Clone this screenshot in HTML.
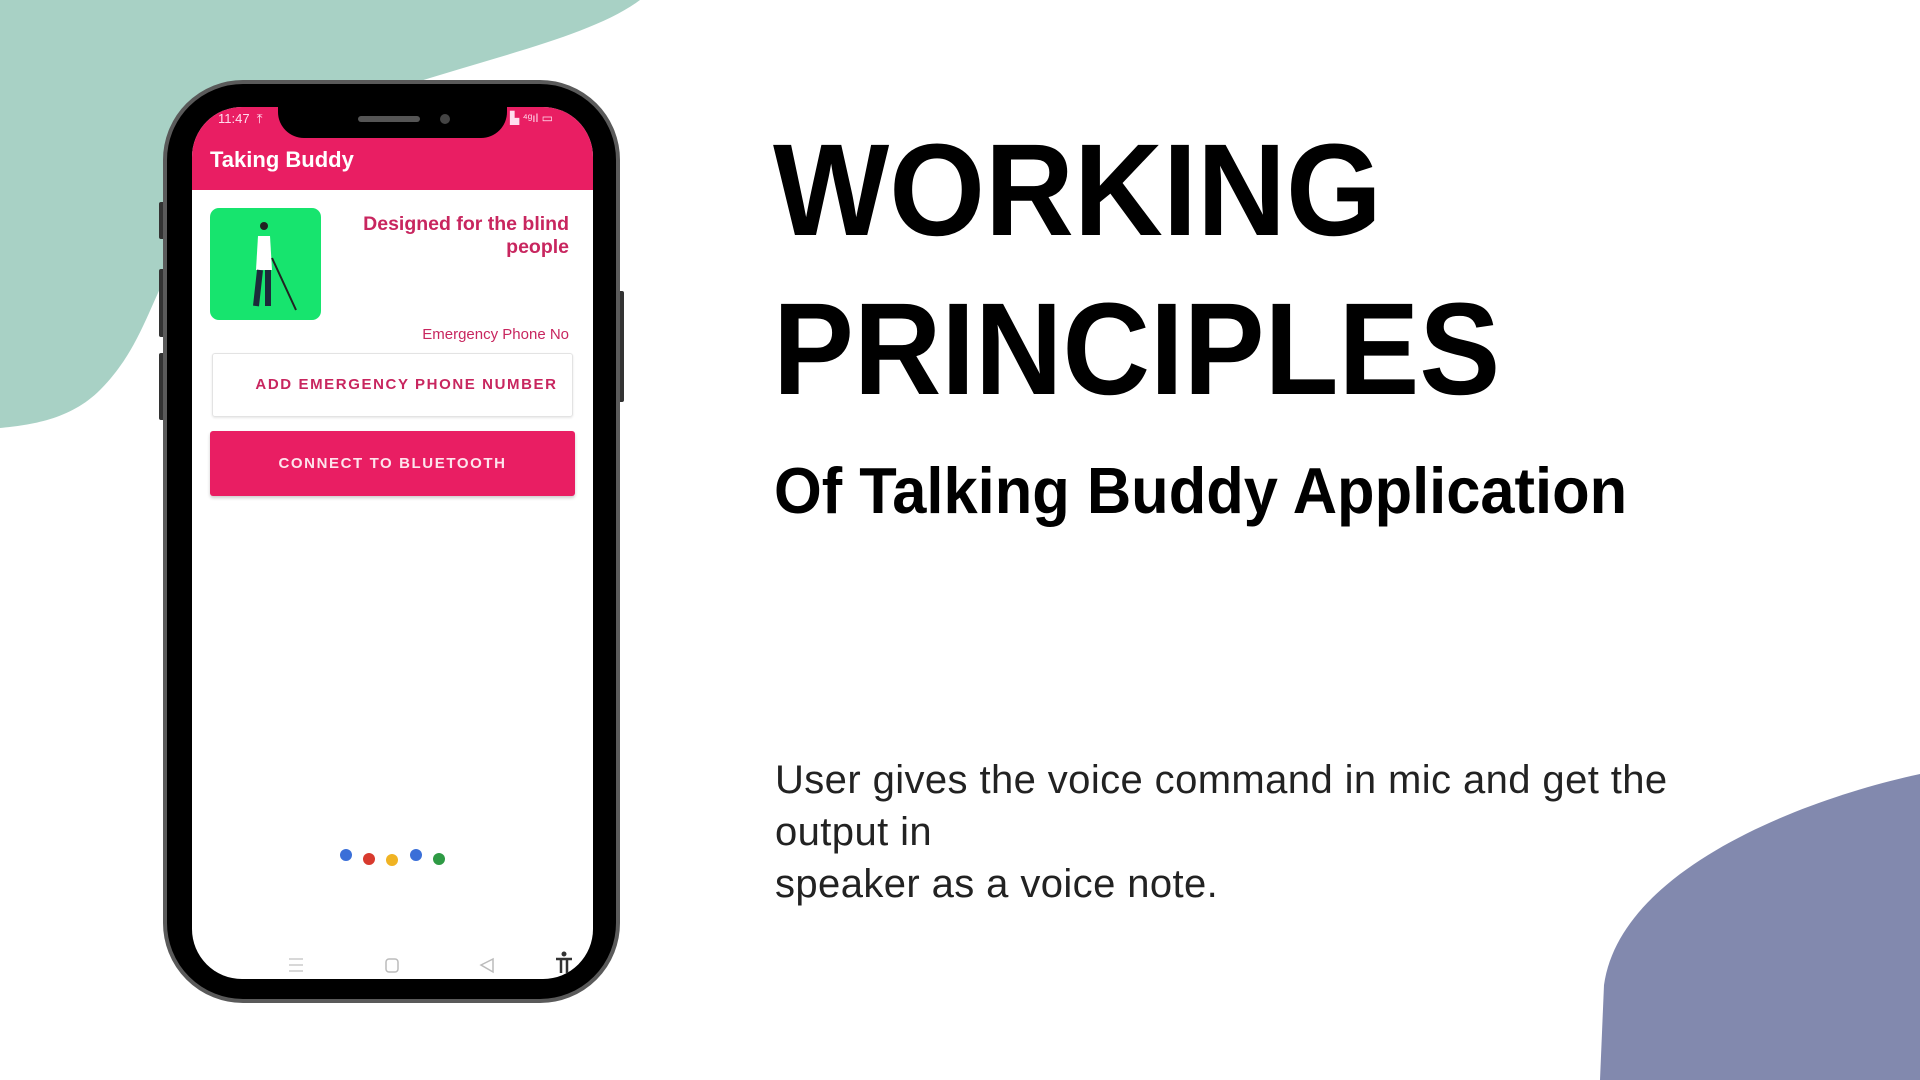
<!DOCTYPE html>
<html><head><meta charset="utf-8"><style>
*{margin:0;padding:0;box-sizing:border-box}
body{width:1920px;height:1080px;position:relative;overflow:hidden;background:#fff;font-family:"Liberation Sans",sans-serif}
.a{position:absolute}
.h{font-weight:bold;color:#000;transform-origin:0 0;white-space:nowrap;font-size:131px;line-height:1}
.body{font-size:40px;letter-spacing:0.4px;color:#222;white-space:nowrap;line-height:52px}
.pk{color:#c8265f}
</style></head><body>
<svg class="a" style="left:0;top:0" width="1920" height="1080">
<path d="M0 0 L640 0 C560 60 330 80 240 170 C150 260 160 330 100 390 C70 420 30 425 0 428 Z" fill="#a8d1c5"/>
<path d="M1920 774 C1800 800 1620 870 1604 985 L1600 1080 L1920 1080 Z" fill="#8289ae"/>
</svg>
<!-- phone -->
<div class="a" style="left:159px;top:202px;width:8px;height:37px;background:#333;border-radius:2px"></div>
<div class="a" style="left:159px;top:269px;width:8px;height:68px;background:#333;border-radius:2px"></div>
<div class="a" style="left:159px;top:353px;width:8px;height:67px;background:#333;border-radius:2px"></div>
<div class="a" style="left:616px;top:291px;width:8px;height:111px;background:#333;border-radius:2px"></div>
<div class="a" style="left:163px;top:80px;width:457px;height:923px;background:#000;border:4px solid #5a5a5a;border-radius:80px"></div>
<div class="a" style="left:192px;top:107px;width:401px;height:872px;background:#fff;border-radius:50px;overflow:hidden">
  <div class="a" style="left:0;top:0;width:401px;height:83px;background:#e91e63"></div>
  <div class="a" style="left:26px;top:4px;color:#fde;font-size:13px">11:47 &nbsp;⤒</div>
  <div class="a" style="left:318px;top:4px;color:#fde;font-size:12px">▙ ⁴ᵍıl ▭</div>
  <div class="a" style="left:18px;top:40px;color:#fff;font-size:22px;font-weight:bold">Taking Buddy</div>
  <div class="a" style="left:18px;top:101px;width:111px;height:112px;background:#17e46e;border-radius:9px">
    <svg width="111" height="112"><circle cx="54" cy="18" r="4" fill="#222"/><path d="M48 28 L60 28 L62 62 L46 62 Z" fill="#fff"/><path d="M50 62 L46 98 M58 62 L58 98" stroke="#1c2a3a" stroke-width="6"/><path d="M62 50 L86 102" stroke="#222" stroke-width="2"/></svg>
  </div>
  <div class="a pk" style="right:24px;top:106px;text-align:right;font-size:19.5px;font-weight:bold;line-height:23px">Designed for the blind<br>people</div>
  <div class="a pk" style="right:24px;top:219px;font-size:15px">Emergency Phone No</div>
  <div class="a" style="left:20px;top:246px;width:361px;height:64px;border:1px solid #e3e3e3;border-radius:3px;box-shadow:0 1px 2px rgba(0,0,0,.1);text-align:center;line-height:62px;font-size:15px;font-weight:bold;letter-spacing:1.6px;color:#c8265f;padding-left:28px">ADD EMERGENCY PHONE NUMBER</div>
  <div class="a" style="left:18px;top:324px;width:365px;height:65px;background:#e91e63;border-radius:3px;box-shadow:0 2px 3px rgba(0,0,0,.2);text-align:center;line-height:65px;font-size:15px;font-weight:bold;letter-spacing:1.6px;color:#fde4ec">CONNECT TO BLUETOOTH</div>
  <svg class="a" style="left:0;top:730px" width="401" height="142">
    <circle cx="154" cy="18" r="6" fill="#3a6fd8"/><circle cx="177" cy="22" r="6" fill="#d83a2e"/><circle cx="200" cy="23" r="6" fill="#f0b323"/><circle cx="224" cy="18" r="6" fill="#3a6fd8"/><circle cx="247" cy="22" r="6" fill="#2e9a44"/>
    <path d="M97 122h14M97 128h14M97 134h14" stroke="#ccc" stroke-width="1.5"/>
    <rect x="194" y="122" width="12" height="13" rx="3" fill="none" stroke="#bbb" stroke-width="1.5"/>
    <path d="M301 122 L289 128 L301 135 Z" fill="none" stroke="#bbb" stroke-width="1.5"/>
    <circle cx="372" cy="117" r="2.5" fill="#333"/><path d="M364 122h16M369 122v14M375 122v14" stroke="#333" stroke-width="2.5"/>
  </svg>
</div>
<div class="a" style="left:278px;top:100px;width:229px;height:38px;background:#000;border-radius:0 0 26px 26px"></div>
<div class="a" style="left:358px;top:116px;width:62px;height:6px;background:#555;border-radius:3px"></div>
<div class="a" style="left:440px;top:114px;width:10px;height:10px;background:#444;border-radius:50%"></div>
<!-- text -->
<div class="a h" style="left:773px;top:124px;transform:scaleX(.94)">WORKING</div>
<div class="a h" style="left:773px;top:283px;transform:scaleX(.925)">PRINCIPLES</div>
<div class="a h" style="left:774px;top:458px;font-size:65px;transform:scaleX(.945)">Of Talking Buddy Application</div>
<div class="a body" style="left:775px;top:754px">User gives the voice command in mic and get the</div>
<div class="a body" style="left:775px;top:806px">output in</div>
<div class="a body" style="left:775px;top:858px">speaker as a voice note.</div>
</body></html>
